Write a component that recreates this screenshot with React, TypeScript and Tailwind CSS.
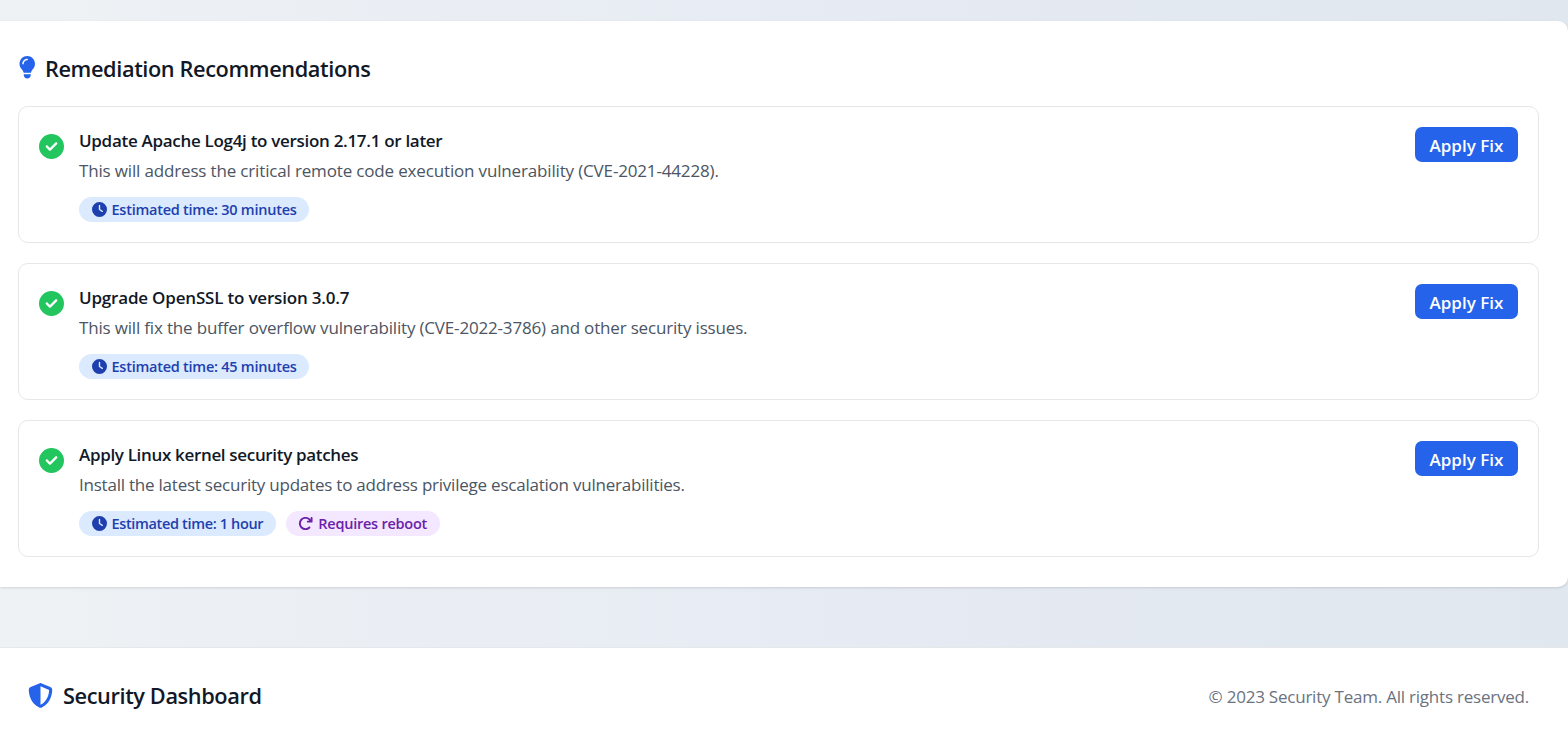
import {
  FaArrowRotateRight,
  FaCircleCheck,
  FaClock,
  FaLightbulb,
  FaShieldHalved,
} from "react-icons/fa6";

type Recommendation = {
  title: string;
  titleTracking: string;
  description: string;
  descriptionTracking: string;
  time: string;
  timeTracking: string;
  reboot?: boolean;
};

const recommendations: Recommendation[] = [
  {
    title: "Update Apache Log4j to version 2.17.1 or later",
    titleTracking: "tracking-[-0.3px]",
    description:
      "This will address the critical remote code execution vulnerability (CVE-2021-44228).",
    descriptionTracking: "tracking-[-0.16px]",
    time: "Estimated time: 30 minutes",
    timeTracking: "tracking-[-0.25px]",
  },
  {
    title: "Upgrade OpenSSL to version 3.0.7",
    titleTracking: "tracking-[-0.19px]",
    description:
      "This will fix the buffer overflow vulnerability (CVE-2022-3786) and other security issues.",
    descriptionTracking: "tracking-[-0.175px]",
    time: "Estimated time: 45 minutes",
    timeTracking: "tracking-[-0.25px]",
  },
  {
    title: "Apply Linux kernel security patches",
    titleTracking: "tracking-[-0.33px]",
    description:
      "Install the latest security updates to address privilege escalation vulnerabilities.",
    descriptionTracking: "tracking-[-0.225px]",
    time: "Estimated time: 1 hour",
    timeTracking: "tracking-[-0.345px]",
    reboot: true,
  },
];

function RecommendationCard({ item }: { item: Recommendation }) {
  return (
    <li className="flex h-[137px] items-start rounded-[10px] border border-[#e5e7eb] p-5">
      <FaCircleCheck className="mt-[7px] size-[25px] shrink-0 text-[#22c55e]" />
      <div className="-mt-px ml-[15px] flex-1">
        <h3
          className={`text-[17px] leading-[30px] font-semibold text-[#111827] ${item.titleTracking}`}
        >
          {item.title}
        </h3>
        <p
          className={`text-[17px] leading-[30px] text-[#4b5563] ${item.descriptionTracking}`}
        >
          {item.description}
        </p>
        <div className="mt-[11px] flex gap-[10px]">
          <span className="flex h-[25px] items-center gap-[5px] rounded-full bg-[#dbeafe] px-[12.5px] text-[14.5px] font-semibold text-[#1e40af]">
            <FaClock className="size-[15px] shrink-0" />
            <span className={item.timeTracking}>{item.time}</span>
          </span>
          {item.reboot && (
            <span className="flex h-[25px] items-center gap-[5px] rounded-full bg-[#f3e8ff] px-[12.5px] text-[14.5px] font-semibold text-[#6b21a8]">
              <FaArrowRotateRight className="size-[15px] shrink-0" />
              <span className="tracking-[-0.24px]">Requires reboot</span>
            </span>
          )}
        </div>
      </div>
      <button className="flex h-[35px] w-[103px] items-center justify-center rounded-[7px] bg-[#2563eb] pt-[2px] text-[17px] font-semibold tracking-[0.02px] text-white">
        Apply Fix
      </button>
    </li>
  );
}

export default function App() {
  return (
    <div className="flex h-[737px] flex-col overflow-hidden bg-linear-to-r from-[#eef2f5] via-[#e7ebf3] to-[#e0e7ee] pt-[21px] font-['Open_Sans',sans-serif]">
      <main className="h-[566px] rounded-r-[10px] bg-white pt-[30px] pr-[29px] pl-[18px] shadow">
        <h2 className="flex h-[35px] items-center text-[21.75px] font-semibold tracking-[-0.4px] text-[#111827]">
          <FaLightbulb className="mr-[7px] mb-[2px] -ml-[2.5px] size-[22.5px] text-[#2563eb]" />
          <span className="pt-[2px]">Remediation Recommendations</span>
        </h2>
        <ul className="mt-5 flex flex-col gap-5">
          {recommendations.map((item) => (
            <RecommendationCard key={item.title} item={item} />
          ))}
        </ul>
      </main>
      <footer className="mt-[60px] flex h-[90px] items-start justify-between border-t border-[#e5e7eb] bg-white pt-[30px] pr-[39px] pl-[28px]">
        <div className="flex h-[35px] items-center text-[21.75px] font-semibold tracking-[-0.4px] text-[#111827]">
          <FaShieldHalved className="mr-[10px] size-[25px] text-[#2563eb]" />
          <span className="pt-[2px]">Security Dashboard</span>
        </div>
        <p className="text-[17px] leading-[37px] tracking-[-0.22px] text-[#6b7280]">
          © 2023 Security Team. All rights reserved.
        </p>
      </footer>
    </div>
  );
}
